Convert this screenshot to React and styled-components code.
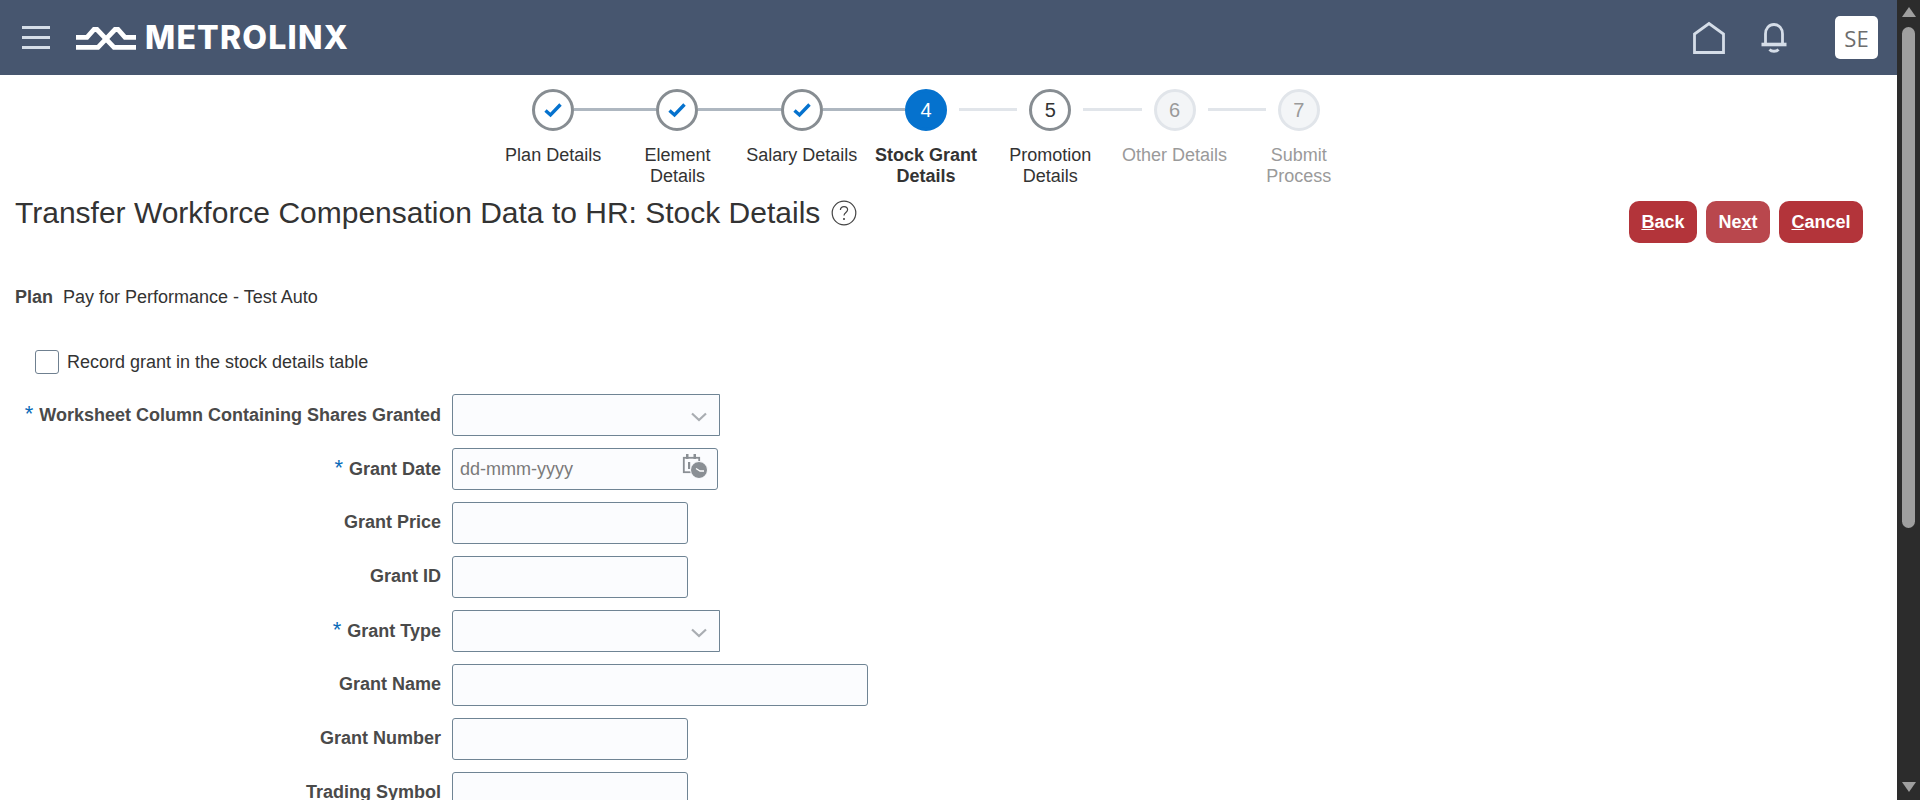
import React from "react";
import styled, { createGlobalStyle } from "styled-components";

const steps = [
  { label: "Plan Details", state: "done" },
  { label: "Element Details", state: "done" },
  { label: "Salary Details", state: "done" },
  { label: "Stock Grant Details", state: "current", n: 4 },
  { label: "Promotion Details", state: "next", n: 5 },
  { label: "Other Details", state: "off", n: 6 },
  { label: "Submit Process", state: "off", n: 7 },
];

const fields = [
  { label: "Worksheet Column Containing Shares Granted", required: true, kind: "select" },
  { label: "Grant Date", required: true, kind: "date" },
  { label: "Grant Price", width: 236 },
  { label: "Grant ID", width: 236 },
  { label: "Grant Type", required: true, kind: "select" },
  { label: "Grant Name", width: 416 },
  { label: "Grant Number", width: 236 },
  { label: "Trading Symbol", width: 236 },
];

const App = () => (
  <>
    <GlobalStyle />
    <Shell>
      <Main>
        <Header>
          <Brand>
            <Burger>
              <i />
              <i />
              <i />
            </Burger>
            <LogoMark viewBox="0 0 60 24" fill="none" stroke="#fff" strokeWidth="4.8">
              <path d="M0 11.3H11L18 3.5H21L38 21.3H60" />
              <path d="M0 21.3H22L39 3.5H42L49 11.3H60" />
            </LogoMark>
            <LogoText>METROLINX</LogoText>
          </Brand>
          <HeaderIcons>
            <svg width="34" height="34" viewBox="0 0 34 34" fill="none" stroke="#d5dde8" strokeWidth="2.8">
              <path d="M2.5 31.5V13L17 2.5L31.5 13V31.5Z" />
            </svg>
            <BellIcon width="28" height="32" viewBox="0 0 28 32" fill="none" stroke="#d5dde8" strokeWidth="2.8">
              <path d="M5.5 22V12C5.5 6.5 9 2.5 14 2.5S22.500 6.500 22.500 12V22" />
              <path d="M1.500 22.500H26.500" strokeWidth="3.600" />
              <path d="M9.500 27.500C11.500 29.800 16.500 29.800 18.500 27.500" />
            </BellIcon>
            <Avatar>SE</Avatar>
          </HeaderIcons>
        </Header>

        <Stepper>
          {steps.map((s, i) => (
            <Step key={s.label}>
              <Track>
                <Line
                  $gap="right"
                  $state={i === 0 ? "none" : steps[i - 1].state === "done" ? "done" : "todo"}
                />
                <Dot $state={s.state}>
                  {s.state === "done" ? (
                    <svg width="20" height="16" viewBox="0 0 20 16" fill="none" stroke="#0572ce" strokeWidth="3.4">
                      <path d="M2.5 8.5L7.5 13L17.5 2.5" />
                    </svg>
                  ) : (
                    s.n
                  )}
                </Dot>
                <Line
                  $gap="left"
                  $state={i === steps.length - 1 ? "none" : s.state === "done" ? "done" : "todo"}
                />
              </Track>
              <StepLabel $state={s.state}>{s.label}</StepLabel>
            </Step>
          ))}
        </Stepper>

        <TitleRow>
          <Title>
            Transfer Workforce Compensation Data to HR: Stock Details
            <svg width="26" height="26" viewBox="0 0 26 26" fill="none" stroke="#444" strokeWidth="1.2">
              <circle cx="13" cy="13" r="11.8" />
              <path d="M9.400 10C9.400 7.800 11 6.600 13 6.600S16.600 7.900 16.600 9.800C16.600 12.400 13 12.600 13 15.600" />
              <path d="M13 18V20" strokeWidth="1.600" />
            </svg>
          </Title>
          <Buttons>
            <ActionButton>
              <u>B</u>ack
            </ActionButton>
            <ActionButton $muted>
              Ne<u>x</u>t
            </ActionButton>
            <ActionButton>
              <u>C</u>ancel
            </ActionButton>
          </Buttons>
        </TitleRow>

        <PlanRow>
          <b>Plan</b>
          <span>Pay for Performance - Test Auto</span>
        </PlanRow>

        <CheckRow>
          <CheckBox />
          <span>Record grant in the stock details table</span>
        </CheckRow>

        <Form>
          {fields.map((f) => (
            <FieldRow key={f.label}>
              <FieldLabel $required={f.required}>
                {f.required && <Star>*</Star>}
                {f.label}
              </FieldLabel>
              {f.kind === "select" ? (
                <SelectBox>
                  <svg width="16" height="10" viewBox="0 0 16 10" fill="none" stroke="#a9adb2" strokeWidth="2.200">
                    <path d="M1 1.500L8 8L15 1.500" />
                  </svg>
                </SelectBox>
              ) : f.kind === "date" ? (
                <DateBox>
                  <span>dd-mmm-yyyy</span>
                  <CalendarIcon width="26" height="26" viewBox="0 0 26 26">
                    <rect x="1.800" y="4.800" width="15.400" height="14.400" fill="none" stroke="#8a8f94" strokeWidth="1.800" />
                    <path d="M4 1H6.500V6H4ZM11.500 1H14V6H11.500Z" fill="#8a8f94" />
                    <path d="M6 9H8.200V16H6Z" fill="#8a8f94" />
                    <circle cx="17" cy="17" r="8.500" fill="#8a8f94" stroke="#fbfcfe" strokeWidth="1" />
                    <path d="M14 15.500L18 18H22" fill="none" stroke="#fff" strokeWidth="1.300" />
                  </CalendarIcon>
                </DateBox>
              ) : (
                <TextBox $width={f.width} />
              )}
            </FieldRow>
          ))}
        </Form>
      </Main>

      <ScrollBar>
        <Arrow />
        <Thumb />
        <Arrow $down />
      </ScrollBar>
    </Shell>
  </>
);

export default App;

const GlobalStyle = createGlobalStyle`
  html, body {
    margin: 0;
    height: 800px;
    overflow: hidden;
    background: #fff;
    font-family: "Liberation Sans", Arial, sans-serif;
    color: #333;
  }
`;

const Shell = styled.div`
  display: flex;
  width: 1920px;
  height: 800px;
  overflow: hidden;
`;

const Main = styled.div`
  width: 1897px;
  height: 800px;
  overflow: hidden;
`;

const Header = styled.header`
  display: flex;
  align-items: center;
  justify-content: space-between;
  height: 75px;
  padding: 0 19px 0 22px;
  background: #47566f;
`;

const Brand = styled.div`
  display: flex;
  align-items: center;
`;

const Burger = styled.div`
  display: flex;
  flex-direction: column;
  gap: 7px;
  width: 28px;
  margin-right: 26px;

  i {
    display: block;
    height: 3px;
    background: #d5dde8;
  }
`;

const LogoMark = styled.svg`
  width: 60px;
  height: 24px;
  margin-right: 9px;
`;

const LogoText = styled.span`
  font-family: Inter, sans-serif;
  font-size: 32px;
  font-weight: 800;
  letter-spacing: 1.2px;
  color: #fff;
`;

const HeaderIcons = styled.div`
  display: flex;
  align-items: center;
`;

const BellIcon = styled.svg`
  margin-left: 34px;
  margin-right: 47px;
`;

const Avatar = styled.div`
  display: flex;
  align-items: center;
  justify-content: center;
  width: 43px;
  height: 43px;
  border-radius: 5px;
  background: #fff;
  font-family: "Open Sans", sans-serif;
  font-size: 22px;
  color: #6d6d6d;
`;

const Stepper = styled.div`
  display: flex;
  width: 870px;
  height: 114px;
  margin-left: 491px;
  padding-top: 14px;
  box-sizing: border-box;
`;

const Step = styled.div`
  flex: 1;
  display: flex;
  flex-direction: column;
  align-items: center;
`;

const Track = styled.div`
  display: flex;
  align-items: center;
  width: 100%;
  height: 42px;
`;

const lineColor = { done: "#aeb7c0", todo: "#e1e5ea", none: "transparent" };

const Line = styled.div`
  flex: none;
  box-sizing: content-box;
  width: calc(50% - 21px - ${(p) => (p.$state === "todo" ? "12px" : "0px")});
  height: 3px;
  margin-top: -2px;
  background: ${(p) => lineColor[p.$state]};
  margin-${(p) => p.$gap}: ${(p) => (p.$state === "todo" ? "12px" : "0")};
`;

const dotBorder = { done: "#878d92", next: "#878d92", current: "#0572ce", off: "#e1e5ea" };
const dotBg = { done: "#fff", next: "#fff", current: "#0572ce", off: "#f3f5f7" };
const dotText = { next: "#333", current: "#fff", off: "#9a9a9a" };

const Dot = styled.div`
  display: flex;
  align-items: center;
  justify-content: center;
  flex: none;
  width: 42px;
  height: 42px;
  box-sizing: border-box;
  border-radius: 50%;
  border: 3px solid ${(p) => dotBorder[p.$state]};
  background: ${(p) => dotBg[p.$state]};
  color: ${(p) => dotText[p.$state]};
  font-size: 20px;
`;

const StepLabel = styled.div`
  width: 118px;
  margin-top: 14px;
  text-align: center;
  font-size: 18px;
  line-height: 21px;
  font-weight: ${(p) => (p.$state === "current" ? 700 : 400)};
  color: ${(p) => (p.$state === "off" ? "#9a9a9a" : "#333")};
`;

const TitleRow = styled.div`
  display: flex;
  justify-content: space-between;
  align-items: flex-start;
  height: 93px;
  padding: 3px 34px 0 15px;
`;

const Title = styled.h1`
  display: flex;
  align-items: center;
  gap: 11px;
  margin: 0;
  font-size: 30px;
  line-height: 42px;
  font-weight: 400;
  color: #333;
`;

const Buttons = styled.div`
  display: flex;
  gap: 9px;
  margin-top: 9px;
`;

const ActionButton = styled.button`
  height: 42px;
  padding: 0 12.5px;
  border: none;
  border-radius: 10px;
  background: ${(p) => (p.$muted ? "#b9474d" : "#b3343a")};
  color: #fff;
  font-family: "Liberation Sans", Arial, sans-serif;
  font-size: 18px;
  font-weight: 700;
`;

const PlanRow = styled.div`
  display: flex;
  gap: 10px;
  padding-left: 15px;
  height: 24px;
  align-items: center;
  font-size: 18px;

  b {
    color: #444;
  }
`;

const CheckRow = styled.div`
  display: flex;
  align-items: center;
  gap: 8px;
  margin-top: 41px;
  padding-left: 35px;
  font-size: 18px;
`;

const CheckBox = styled.div`
  width: 24px;
  height: 24px;
  box-sizing: border-box;
  border: 1px solid #6f8090;
  border-radius: 3px;
  background: #fff;
`;

const Form = styled.div`
  display: flex;
  flex-direction: column;
  gap: 12px;
  margin-top: 20px;
`;

const FieldRow = styled.div`
  display: flex;
  align-items: center;
  gap: 11px;
  height: 42px;
`;

const FieldLabel = styled.div`
  width: 441px;
  margin-top: ${(p) => (p.$required ? "0" : "-2px")};
  text-align: right;
  font-size: 18px;
  font-weight: 700;
  color: #4a4a4a;
`;

const Star = styled.span`
  margin-right: 6px;
  font-size: 22px;
  line-height: 18px;
  font-weight: 400;
  color: #0a6bb8;
`;

const boxBase = `
  box-sizing: border-box;
  height: 42px;
  border: 1px solid #6f8494;
  background: #fbfcfe;
`;

const TextBox = styled.div`
  ${boxBase}
  width: ${(p) => p.$width}px;
  border-radius: 3px;
`;

const SelectBox = styled.div`
  ${boxBase}
  display: flex;
  align-items: center;
  justify-content: flex-end;
  width: 268px;
  padding: 3px 12px 0 0;
  border-radius: 3px 0 0 3px;
`;

const DateBox = styled.div`
  ${boxBase}
  display: flex;
  align-items: center;
  justify-content: space-between;
  width: 266px;
  padding: 0 9px 0 7px;
  border-radius: 3px;
  font-size: 18px;
  color: #7a7a7a;
`;

const CalendarIcon = styled.svg`
  margin-bottom: 6px;
`;

const ScrollBar = styled.div`
  display: flex;
  flex-direction: column;
  align-items: center;
  width: 23px;
  height: 800px;
  background: #2c2c2c;
`;

const Arrow = styled.div`
  flex: none;
  width: 0;
  height: 0;
  margin: ${(p) => (p.$down ? "auto 0 8px" : "7px 0 0")};
  border-left: 7px solid transparent;
  border-right: 7px solid transparent;
  border-${(p) => (p.$down ? "top" : "bottom")}: 10px solid #9f9f9f;
`;

const Thumb = styled.div`
  flex: none;
  width: 13px;
  height: 501px;
  margin-top: 10px;
  border-radius: 7px;
  background: #9f9f9f;
`;
